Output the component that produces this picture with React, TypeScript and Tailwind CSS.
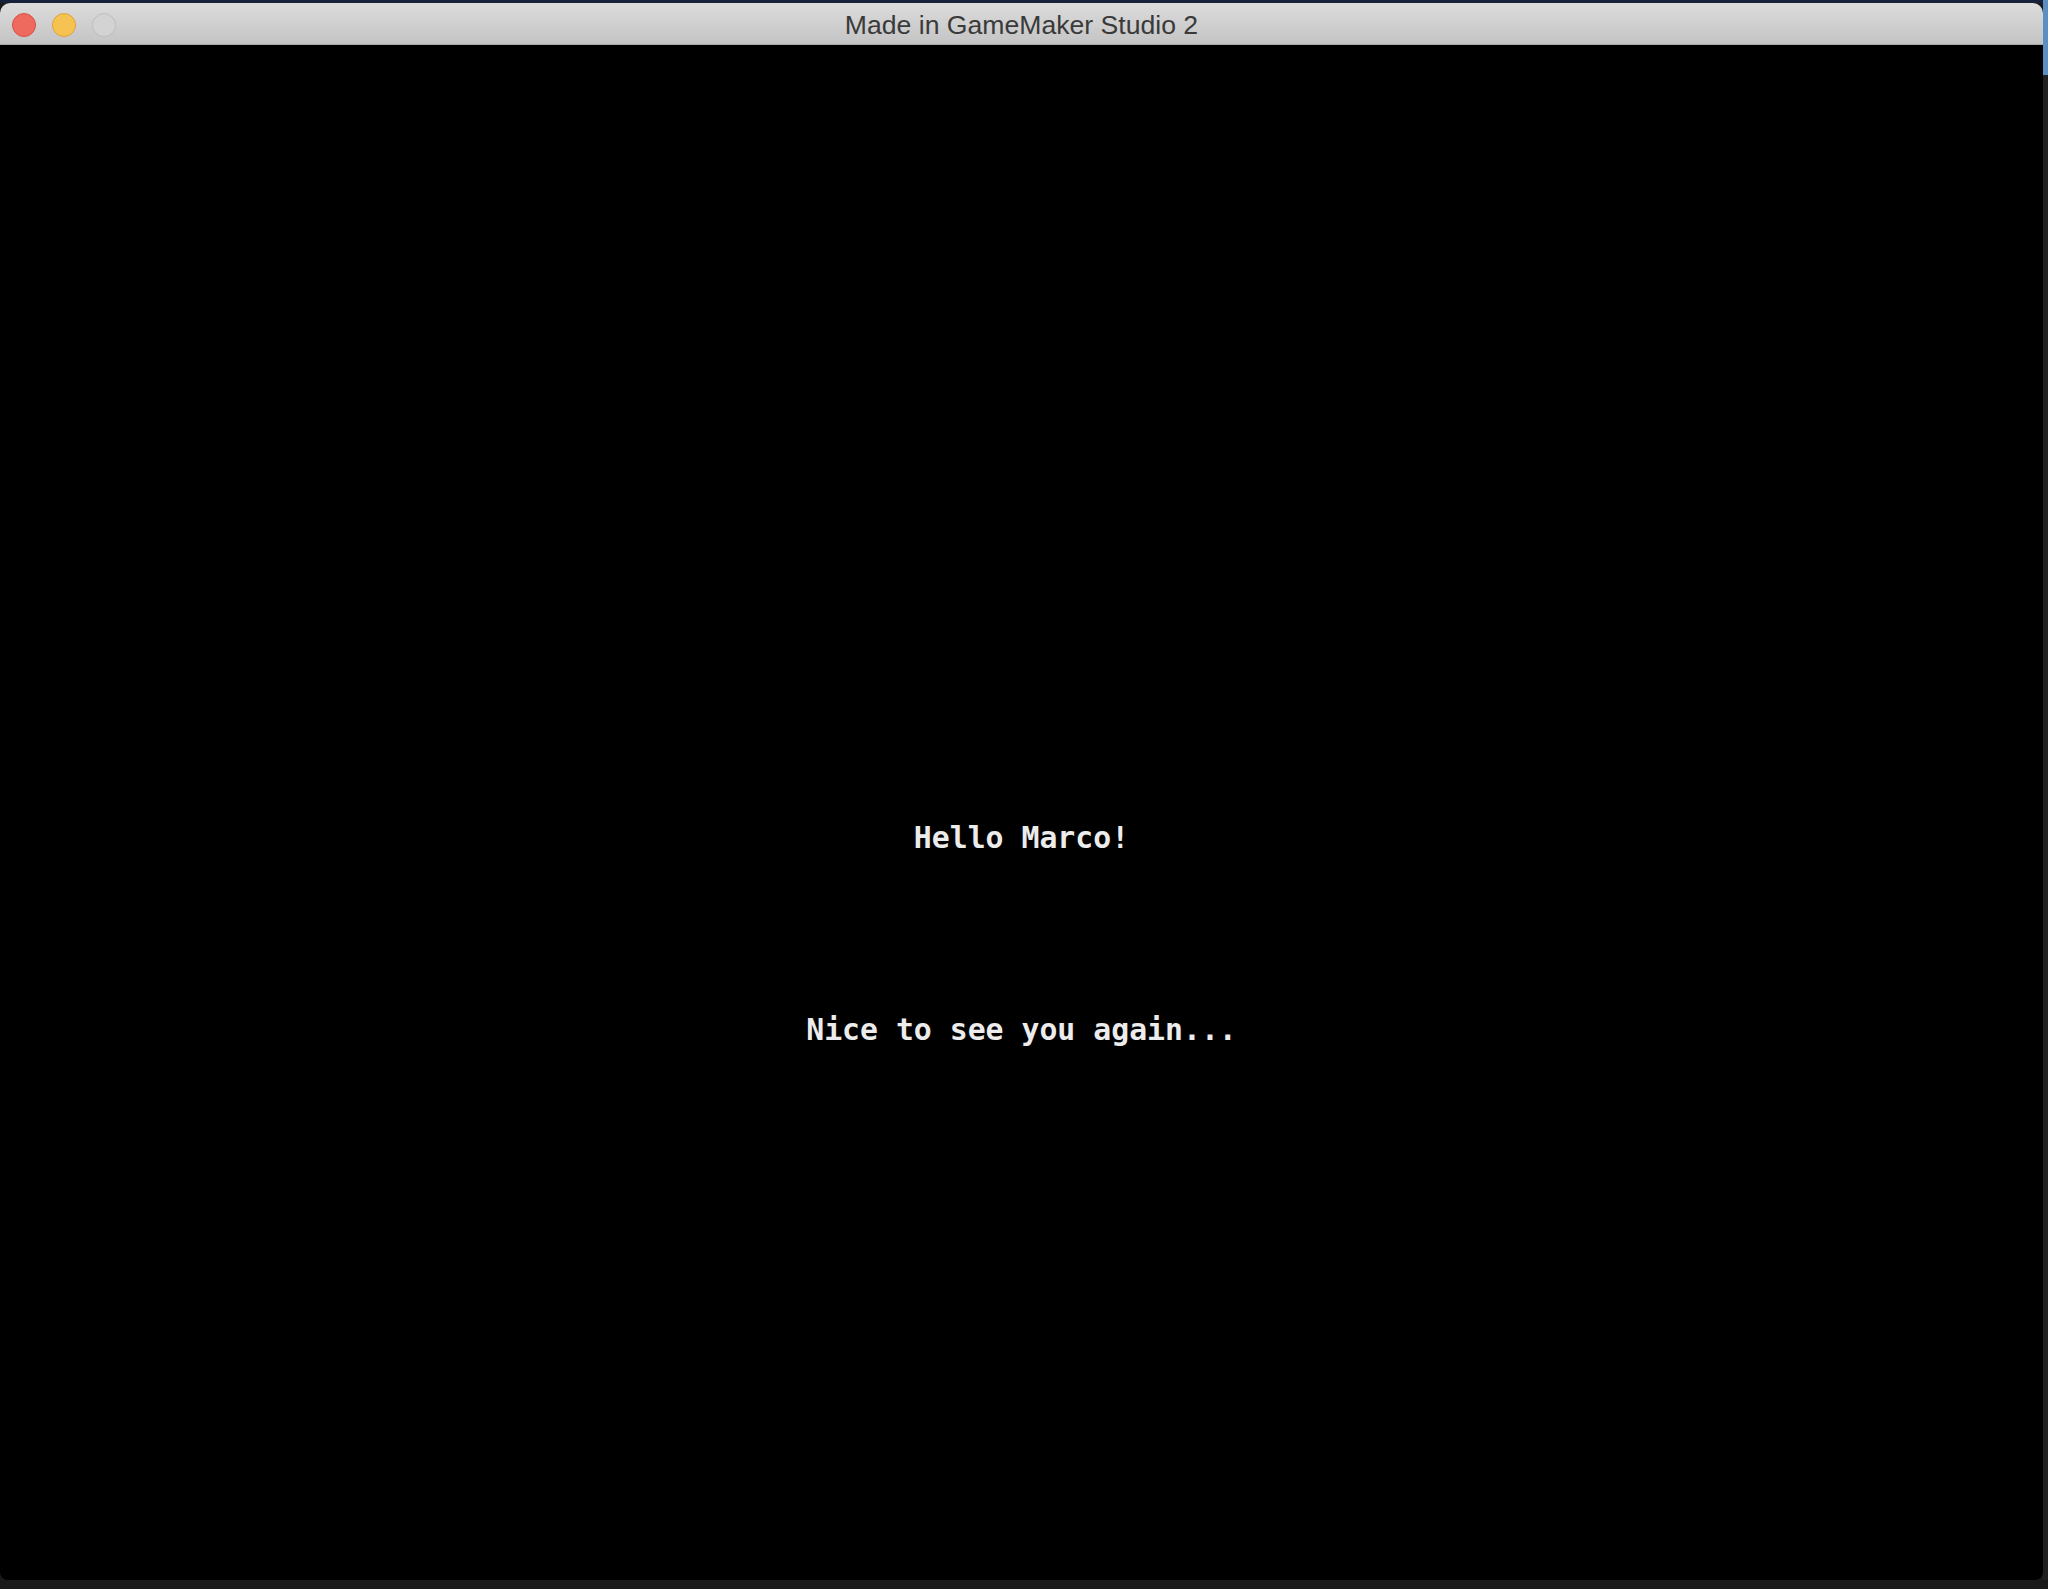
import React from "react";

export default function App() {
  return (
    <div className="w-[2048px] h-[1589px] bg-[#1a1a1a] flex flex-col overflow-hidden">
      <div className="flex flex-1">
        {/* window */}
        <div className="w-[2043px] flex flex-col">
          <div className="h-[3px] bg-[#17223a]" />
          <div className="flex-1 flex flex-col rounded-t-[10px] rounded-b-[8px] overflow-hidden bg-black">
            {/* title bar */}
            <div className="relative h-[42px] bg-gradient-to-b from-[#dcdcdc] to-[#c4c4c4] border-b border-[#a9a9a9] flex items-center justify-center">
              <div className="absolute left-[12px] top-[10px] flex gap-[16px]">
                <span className="w-[24px] h-[24px] rounded-full bg-[#ee6a5f] border border-[#d65147]" />
                <span className="w-[24px] h-[24px] rounded-full bg-[#f6c352] border border-[#dca33a]" />
                <span className="w-[24px] h-[24px] rounded-full bg-[#d3d3d3] border border-[#bdbdbd]" />
              </div>
              <span className="text-[26.6px] text-[#3a3a3a] font-['Liberation_Sans',Arial,sans-serif] leading-none mt-[3px]">
                Made in GameMaker Studio 2
              </span>
            </div>
            {/* game surface */}
            <div className="flex-1 flex flex-col items-center font-['DejaVu_Sans_Mono','Liberation_Mono',monospace] font-bold text-[#ececec]">
              <div className="h-[775px]" />
              <p className="text-[29.8px] leading-[36px]">Hello Marco!</p>
              <div className="h-[156px]" />
              <p className="text-[29.8px] leading-[36px]">Nice to see you again...</p>
            </div>
          </div>
        </div>
        {/* desktop sliver */}
        <div className="w-[5px] flex flex-col">
          <div className="h-[75px] bg-[#5a8fc4]" />
          <div className="flex-1 bg-[#202020]" />
        </div>
      </div>
      <div className="h-[9px] bg-[#1a1a1a]" />
    </div>
  );
}
